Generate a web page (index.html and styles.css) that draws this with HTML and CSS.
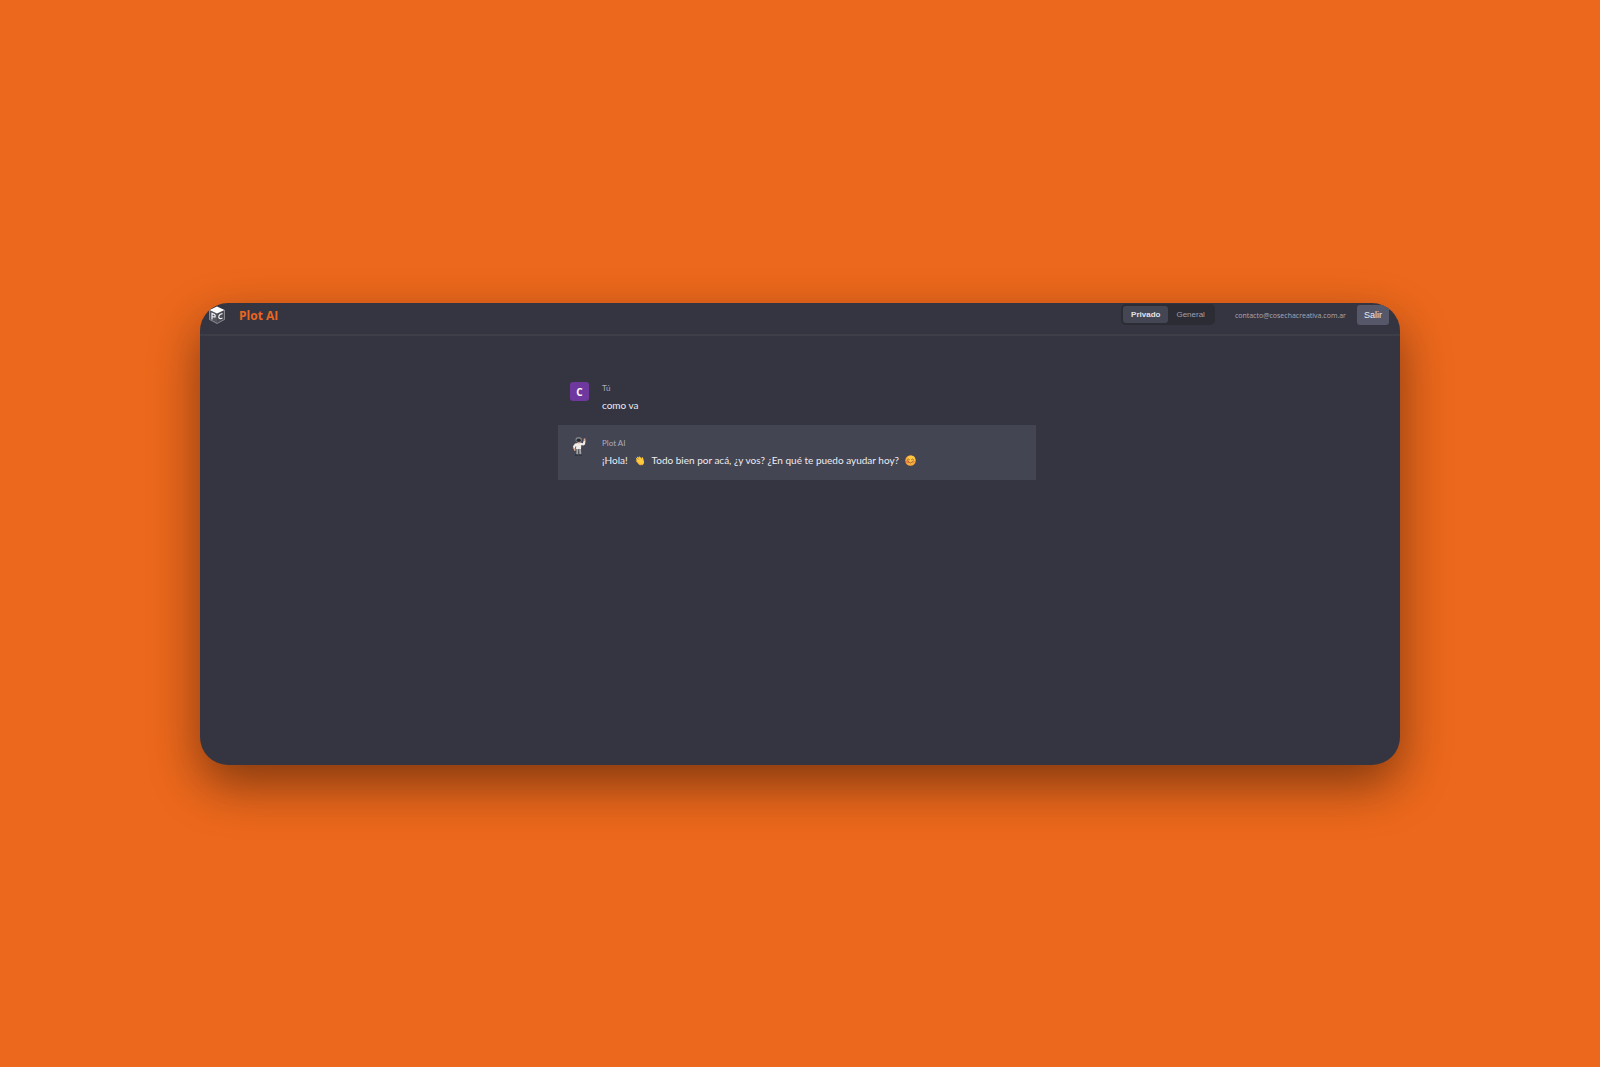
FILE: index.html
```html
<!DOCTYPE html>
<html lang="es">
<head>
<meta charset="utf-8">
<meta name="viewport" content="width=device-width, initial-scale=1">
<title>Plot AI</title>
<link rel="stylesheet" href="styles.css">
</head>
<body>
<div class="window">
  <header class="topbar">
    <svg class="logo" viewBox="0 0 16 18" aria-hidden="true">
      <path d="M0.500 4 8 7.500V17.500L0.500 13.500Z" fill="#55565f"/>
      <path d="M15.500 4 8 7.500V17.500L15.500 13.500Z" fill="#4a4b54"/>
      <path d="M8 0.500 15.500 4 8 7.500 0.500 4Z" fill="#fff"/>
      <path d="M0.500 4V13.500L8 17.500 15.500 13.500V4" fill="none" stroke="#a5a6ae" stroke-width=".7"/>
      <path d="M3 13.500V7.500L5.500 8.500Q6.700 9.500 6 11L3 10.500M13.500 7.500 11 8.500Q9.500 9.500 9.800 11.500 10.500 13.500 13.500 12" fill="none" stroke="#f2f2f4" stroke-width="1.200"/>
    </svg>
    <h1 class="brand">Plot AI</h1>
    <div class="modes">
      <button type="button" class="mode mode-active">Privado</button>
      <button type="button" class="mode">General</button>
    </div>
    <span class="email">contacto@cosechacreativa.com.ar</span>
    <button type="button" class="logout">Salir</button>
  </header>
  <main class="chat">
    <article class="message">
      <div class="avatar avatar-user">C</div>
      <div class="body">
        <p class="author">Tú</p>
        <p class="text">como va</p>
      </div>
    </article>
    <article class="message message-bot">
      <svg class="avatar" viewBox="0 0 19 19" aria-hidden="true">
        <path d="M6.500 9.500H10.800L11.300 17.500H9.200L8.800 12 8.400 17.500H6.300Z" fill="#a3a3a5"/>
        <path d="M8.800 11.500V17.500" stroke="#33343d" stroke-width=".7"/>
        <path d="M5 6.400 10.500 5.600 12.800 6.300 13.600 3.800 15.500 4 15 7.600 13.400 8.500 11.300 8 11 12H6L6.200 9 5.200 10 5.300 11.500 3.600 12 3 9.300Z" fill="#f1ebe6"/>
        <path d="M13.700 4V1.800L15.200 1.300 15.700 4ZM3.500 11.500 5.200 11.200 5.700 13.500 4.300 14Z" fill="#dca78e"/>
        <ellipse cx="8.700" cy="2.800" rx="3.200" ry="2.700" fill="#80858a"/>
        <ellipse cx="8.700" cy="3.200" rx="2.200" ry="1.700" fill="#292b30"/>
        <path d="M7.400 4.900H10.200L9.600 6.600H8Z" fill="#cda18a"/>
        <path d="M5 18H8.200M9 18H12" stroke="#25262b"/>
      </svg>
      <div class="body">
        <p class="author">Plot AI</p>
        <p class="text">¡Hola!
          <svg class="emoji emoji-wave" viewBox="0 0 12 12" role="img" aria-label="Mano saludando">
            <path d="M2.800 4.200 5.800 7M4 2.800 7 5.500M6 2.300 8.300 5" stroke="#ffc83d" stroke-width="1.500" stroke-linecap="round"/>
            <path d="M2.200 6 5.500 4.500 8 5 8.500 2.500Q9.700 2.200 10 3.500L11 7.500Q10.800 11 7.500 11 5.500 11 4.500 9.500Z" fill="#ffc83d"/>
            <path d="M2.200 6.300 4.800 9Q6.500 11.500 9 10.600" fill="none" stroke="#f0953d" stroke-width=".9"/>
            <path d="M1 4.500Q1.200 2.500 3 1.700M10.800 9.800Q10.400 11.200 9.300 11.600" fill="none" stroke="#31648c" stroke-width=".8"/>
          </svg>
          Todo bien por acá, ¿y vos? ¿En qué te puedo ayudar hoy?
          <svg class="emoji" viewBox="0 0 12 12" role="img" aria-label="Cara sonriente">
            <circle cx="6" cy="6" r="5.700" fill="#f9a93b"/>
            <circle cx="6.800" cy="5" r="4.300" fill="#ffc843"/>
            <circle cx="2.800" cy="7.200" r="1.700" fill="#f47a43"/>
            <circle cx="9.400" cy="7.200" r="1.500" fill="#f78e42"/>
            <path d="M2.700 5Q3.800 3.500 4.900 5M7.100 5Q8.200 3.500 9.300 5M3.500 7.500Q6 10 8.500 7.500" fill="none" stroke="#74462b" stroke-width=".8" stroke-linecap="round"/>
          </svg>
        </p>
      </div>
    </article>
  </main>
</div>
</body>
</html>
```
FILE: styles.css
```css
* {
  box-sizing: border-box;
}

body {
  margin: 0;
  min-height: 100vh;
  display: flex;
  align-items: center;
  justify-content: center;
  background: #ec681c;
  font-family: "Open Sans", "Noto Sans", sans-serif;
}

.window {
  width: 75%;
  min-height: 462px;
  border-radius: 28px;
  overflow: hidden;
  background: #353541;
  box-shadow: 0 20px 50px rgba(0, 0, 0, 0.45);
}

.topbar {
  display: flex;
  align-items: flex-start;
  height: 33px;
  padding: 1px 11px 0 9px;
  border-bottom: 2px solid #3e3e49;
}

.logo {
  width: 16px;
  height: 18px;
  margin-top: 2px;
}

.brand {
  flex: 1;
  margin: 0 0 0 14px;
  font-size: 12px;
  line-height: 24px;
  font-weight: 700;
  color: #ea651f;
}

.modes {
  display: flex;
  padding: 2px;
  border-radius: 5px;
  background: #2c2c35;
}

.mode,
.logout {
  border: 0;
  border-radius: 3px;
  font-family: "Liberation Sans", Arial, sans-serif;
  font-weight: 400;
}

.mode {
  height: 17px;
  padding: 0 8px;
  font-size: 8px;
  color: #a0a0b0;
  background: transparent;
}

.mode-active {
  font-weight: 700;
  color: #e2e2e8;
  background: #444654;
}

.email {
  margin: 0 11px 0 20px;
  font-size: 7px;
  line-height: 24px;
  color: #a8a8b6;
}

.logout {
  height: 20px;
  margin-top: 1px;
  padding: 0 7px;
  font-size: 9px;
  color: #ececf1;
  background: #565869;
}

.chat {
  width: 484px;
  max-width: 100%;
  margin: 0 auto;
  padding: 34px 6px 0 0;
}

.message {
  display: flex;
  gap: 13px;
  padding: 12px;
}

.message-bot {
  background: #444552;
}

.avatar {
  flex: none;
  width: 19px;
  height: 19px;
}

.avatar-user {
  border-radius: 3px;
  background: #6f389f;
  color: #fff;
  font-size: 10px;
  line-height: 20px;
  font-weight: 700;
  text-align: center;
}

.body {
  font-family: Lato, "Open Sans", sans-serif;
}

.author,
.text {
  margin: 0;
}

.author {
  margin-bottom: 3px;
  font-size: 8px;
  line-height: 12px;
  color: #acacbe;
}

.text {
  font-size: 10px;
  line-height: 16px;
  color: #ececf1;
}

.emoji {
  width: 11px;
  height: 11px;
  margin: 0 3px;
  vertical-align: -2px;
}

.emoji-wave {
  margin: 0 4px;
}
```
